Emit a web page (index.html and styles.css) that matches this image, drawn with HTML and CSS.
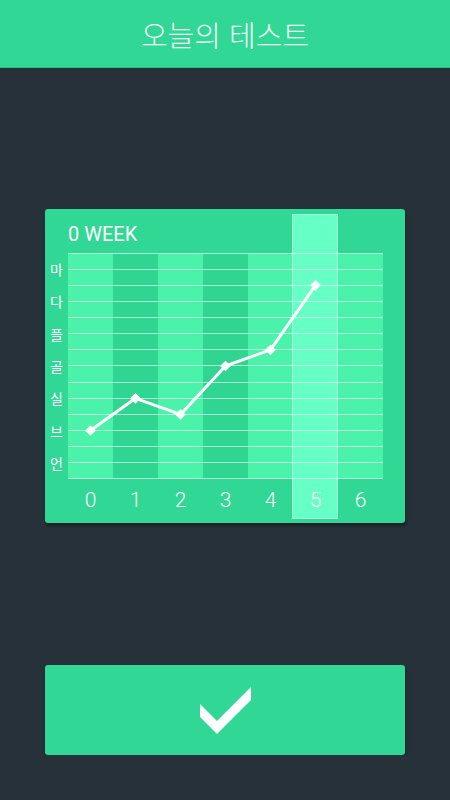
FILE: index.html
```html
<!DOCTYPE html>
<html lang="ko">
<head>
    <meta charset="UTF-8">
    <meta name="viewport" content="width=device-width, initial-scale=1.0">
    <title>오늘의 테스트</title>
    <link rel="stylesheet" href="styles.css">
</head>
<body>

    <header class="topbar">오늘의 테스트</header>

    <div class="card">
        <div class="card-title">0 WEEK</div>

        <div class="today"></div>

        <div class="chart">
            <div class="ylabels">
                <span>마</span>
                <span>다</span>
                <span>플</span>
                <span>골</span>
                <span>실</span>
                <span>브</span>
                <span>언</span>
            </div>
            <div class="plot">
                <div class="col light"></div>
                <div class="col dark"></div>
                <div class="col light"></div>
                <div class="col dark"></div>
                <div class="col light"></div>
                <div class="col now"></div>
                <div class="col light"></div>

                <div class="hlines">
                    <i></i><i></i><i></i><i></i><i></i>
                    <i></i><i></i><i></i><i></i><i></i>
                    <i></i><i></i><i></i><i></i><i></i>
                </div>

                <!-- 점수 라인 -->
                <svg class="line" width="315" height="226" viewBox="0 0 315 226">
                    <polyline points="22.5,177.5 67.5,145.3 112.5,161.4 157.5,113 202.5,96.8 247.5,32.3"
                              fill="none" stroke="#fff" stroke-width="3" stroke-linejoin="round"/>
                    <g fill="#fff">
                        <rect x="18.7" y="173.7" width="7.6" height="7.6" transform="rotate(45 22.5 177.5)"/>
                        <rect x="63.7" y="141.5" width="7.6" height="7.6" transform="rotate(45 67.5 145.3)"/>
                        <rect x="108.7" y="157.6" width="7.6" height="7.6" transform="rotate(45 112.5 161.4)"/>
                        <rect x="153.7" y="109.2" width="7.6" height="7.6" transform="rotate(45 157.5 113)"/>
                        <rect x="198.7" y="93" width="7.6" height="7.6" transform="rotate(45 202.5 96.8)"/>
                        <rect x="243.7" y="28.5" width="7.6" height="7.6" transform="rotate(45 247.5 32.3)"/>
                    </g>
                </svg>
            </div>
        </div>

        <div class="xlabels">
            <span>0</span>
            <span>1</span>
            <span>2</span>
            <span>3</span>
            <span>4</span>
            <span>5</span>
            <span>6</span>
        </div>
    </div>

    <button class="confirm" type="button" aria-label="확인">
        <svg width="51" height="47" viewBox="0 0 51 47">
            <polygon points="0,17 17,34 51,0 51,13 17,47 0,30" fill="#fff"/>
        </svg>
    </button>

</body>
</html>
```

FILE: styles.css
```css
body {
    margin: 0;
    padding: 0;
    background-color: #263139;
    font-family: Roboto, "Noto Sans CJK KR", sans-serif;
    color: #fff;
}
.topbar {
    height: 67px;
    background-color: #31d794;
    box-shadow: 0 1px 0 #2bbd82;
    display: flex;
    align-items: center;
    justify-content: center;
    font-family: "Noto Sans CJK KR", sans-serif;
    font-size: 29px;
    font-weight: 300;
    color: #f2fff9;
}
.card {
    position: relative;
    width: 360px;
    margin: 142px 0 0 45px;
    background-color: #31d794;
    border-radius: 3px;
    box-shadow: 1px 3px 3px rgba(0, 0, 0, 0.35);
}
.card-title {
    height: 38px;
    line-height: 38px;
    padding: 6px 0 0 23px;
    font-size: 20px;
}
.today {
    position: absolute;
    left: 247px;
    top: 5px;
    width: 44px;
    height: 303px;
    background-color: #66ffc5;
    border: 1px solid rgba(255, 255, 255, 0.45);
    z-index: 1;
}
.chart {
    display: flex;
}
.ylabels {
    width: 23px;
    height: 226px;
    display: flex;
    flex-direction: column;
    font-family: "Noto Sans CJK KR", sans-serif;
    font-size: 14px;
}
.ylabels span {
    flex: 1;
    display: flex;
    align-items: center;
    justify-content: center;
}
.plot {
    position: relative;
    width: 315px;
    height: 226px;
    display: flex;
}
.col {
    width: 45px;
}
.col.light {
    background-color: #4bf2aa;
}
.col.dark {
    background-color: #2fd591;
}
.hlines {
    position: absolute;
    inset: 0;
    display: flex;
    flex-direction: column;
    justify-content: space-between;
    z-index: 2;
}
.hlines i {
    display: block;
    height: 1px;
    background-color: rgba(255, 255, 255, 0.6);
}
.line {
    position: absolute;
    left: 0;
    top: 0;
    z-index: 3;
}
.xlabels {
    position: relative;
    z-index: 2;
    display: flex;
    padding: 0 22px 2px 23px;
    height: 42px;
    line-height: 42px;
    font-size: 21px;
    font-weight: 300;
}
.xlabels span {
    width: 45px;
    text-align: center;
}
.confirm {
    display: flex;
    align-items: center;
    justify-content: center;
    width: 360px;
    height: 90px;
    margin: 142px 0 0 45px;
    padding: 0;
    border: none;
    border-radius: 3px;
    background-color: #31d794;
    box-shadow: 1px 3px 3px rgba(0, 0, 0, 0.35);
    cursor: pointer;
}
```
